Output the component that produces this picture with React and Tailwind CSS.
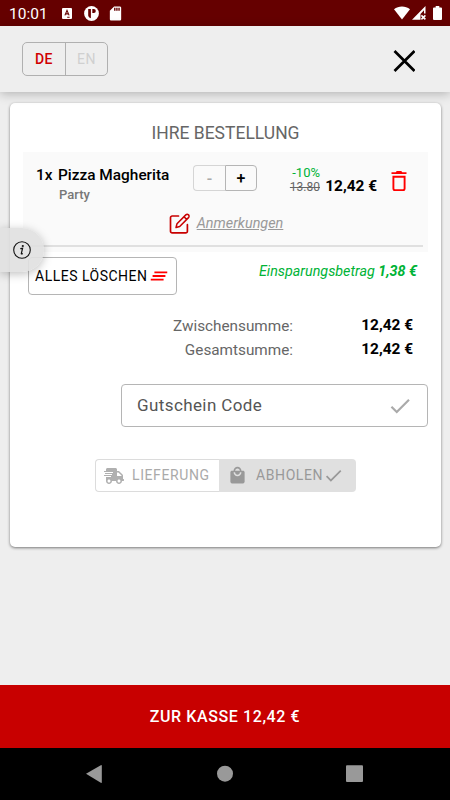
import { FaShippingFast } from 'react-icons/fa'
import { MdClearAll, MdDone, MdLocalMall, MdSdCard } from 'react-icons/md'

function StatusBar() {
  return (
    <div className="h-[26px] bg-[#650000] flex items-center pl-[9px] pr-2 text-white">
      <span className="w-[53px] text-[15.5px] leading-none pt-[3px]">10:01</span>
      <svg width="10" height="11" viewBox="0 0 10 11">
        <rect width="10" height="11" rx="1" fill="#fff" />
        <path d="M2.900 7.400 5 2.400l2.100 5M3.600 5.900h2.800M5.200 9.200h2.400" stroke="#650000" strokeWidth="1.100" fill="none" />
      </svg>
      <svg className="ml-3" width="15" height="15" viewBox="0 0 15 15">
        <circle cx="7.500" cy="7.500" r="7.400" fill="#fff" />
        <path d="M4.200 3h2.700v9.200C5 12 4.200 10.400 4.200 9z" fill="#650000" />
        <path d="M8.300 3h1.500a2 2 0 0 1 0 4H8.300z" fill="#650000" />
      </svg>
      <MdSdCard className="ml-[8px]" size={17} />
      <div className="ml-auto flex items-center">
        <svg width="16" height="14" viewBox="0 0 16 14">
          <path d="M0 3.300C4.600-.4 11.400-.4 16 3.300L8 13.500z" fill="#fff" />
        </svg>
        <svg className="ml-[2px]" width="14" height="14" viewBox="0 0 14 14">
          <path d="M13.500 0v7.500H12V4.200L8.500 8v5.800H0z" fill="#fff" />
          <path d="m9.400 9.400 4 4m0-4-4 4" stroke="#fff" strokeWidth="1.500" />
        </svg>
        <svg className="ml-[7px]" width="9" height="14" viewBox="0 0 9 14">
          <path d="M2.700 0h3.600v1.500H8a1 1 0 0 1 1 1V13a1 1 0 0 1-1 1H1a1 1 0 0 1-1-1V2.500a1 1 0 0 1 1-1h1.700z" fill="#fff" />
        </svg>
      </div>
    </div>
  )
}

function Header() {
  return (
    <header className="relative h-[66px] bg-[#eee] flex items-center justify-between pl-[22px] pr-[35px] shadow-[0_2px_10px_rgba(0,0,0,0.25)]">
      <div className="flex w-[86px] h-[34px] border border-[#b0b0b0] rounded-[5px] text-sm tracking-[0.5px]">
        <button className="w-[43px] border-r border-[#b0b0b0] font-medium text-[#d00000]">DE</button>
        <button className="flex-1 text-[#d0d0d0]">EN</button>
      </div>
      <svg className="mt-[4px]" width="22" height="22" viewBox="0 0 22 22">
        <path d="m1.500 1 20 20M21.500 1l-20 20" stroke="#000" strokeWidth="2.700" />
      </svg>
    </header>
  )
}

function TrashIcon() {
  return (
    <svg className="ml-[14px] mt-[6px]" width="16" height="21" viewBox="0 0 16 21">
      <path d="M2.400 5.700h11.200v11.800a1.600 1.600 0 0 1-1.600 1.600H4a1.600 1.600 0 0 1-1.600-1.600z" fill="none" stroke="#f00" strokeWidth="1.900" />
      <path d="M.5 1.200h4.200L5.800 0h4.400l1.100 1.200h4.200v1.900H.5z" fill="#f00" />
    </svg>
  )
}

function EditIcon() {
  return (
    <svg width="22" height="22" viewBox="0 0 22 22" fill="none" stroke="#c80000" strokeLinejoin="round" strokeLinecap="round">
      <path d="M10.500 3H4.200A1.700 1.700 0 0 0 2.500 4.700v13.500a1.700 1.700 0 0 0 1.700 1.700h13.500a1.700 1.700 0 0 0 1.700-1.700v-6.500" strokeWidth="1.700" />
      <path d="M17.800 1.900a1.900 1.900 0 0 1 2.700 2.700L11.700 13.500 8 14.500l1-3.700zM16 3.700 18.700 6.400" strokeWidth="1.500" />
    </svg>
  )
}

function CartItem() {
  return (
    <div className="h-[100px] bg-[#fafafa] mx-[13px]">
      <div className="h-[51px] flex pt-[13px]">
        <div className="w-[170px] pl-[13px]">
          <div className="flex text-[15.400px] leading-[20px] font-medium text-black">
            <span className="w-[22px]">1x</span>
            <span>Pizza Magherita</span>
          </div>
          <div className="pl-[23px] text-[13px] leading-[19px] font-medium text-[#777]">Party</div>
        </div>
        <div className="flex w-[64px] h-[26px] text-base leading-[23px] font-medium">
          <button className="w-[32px] border border-[#d5d5d5] border-r-0 rounded-l-[4px] text-[#aaa]">-</button>
          <button className="w-[32px] border border-[#b5b5b5] rounded-r-[4px] text-black">+</button>
        </div>
        <div className="w-[63px] text-right leading-[14px] pt-[1px]">
          <div className="text-[13px] text-[#00b336]">-10%</div>
          <div className="text-[12px] text-[#666] line-through">13.80</div>
        </div>
        <div className="w-[57px] pt-[11px] text-right text-[15.400px] leading-[20px] font-bold text-black">12,42 €</div>
        <TrashIcon />
      </div>
      <div className="h-[42px] flex items-center justify-center pb-[1px]">
        <EditIcon />
        <span className="ml-[7px] text-[14.400px] italic underline text-[#999]">Anmerkungen</span>
      </div>
      <div className="h-[2px] mr-[5px] bg-[#e0e0e0]" />
    </div>
  )
}

function TotalRow({ label, value }) {
  return (
    <div className="flex h-6 items-center justify-end pr-[28px]">
      <span className="text-[15.300px] text-[#666]">{label}</span>
      <span className="w-[120px] text-right text-[15.400px] font-bold text-black">{value}</span>
    </div>
  )
}

function OrderCard() {
  return (
    <section className="ml-[10px] mr-[9px] mt-[11px] h-[444px] bg-white rounded-[5px] shadow-[0_1px_3px_rgba(0,0,0,0.5)]">
      <h1 className="h-[49px] pt-[20px] text-center text-[17.500px] leading-[20px] text-[#666]">IHRE BESTELLUNG</h1>
      <CartItem />
      <div className="flex justify-between pl-[18px] pr-[24px] pt-[5px]">
        <button className="w-[149px] h-[38px] border border-[#b5b5b5] rounded-[4px] flex items-center pl-[6px] text-[14px] tracking-[0.5px] text-black">
          ALLES LÖSCHEN
          <MdClearAll className="text-[#ff0000]" size={22} />
        </button>
        <p className="pt-[4px] text-[14.300px] italic text-[#00b336]">
          Einsparungsbetrag <b>1,38 €</b>
        </p>
      </div>
      <div className="pt-[19px]">
        <TotalRow label="Zwischensumme:" value="12,42 €" />
        <TotalRow label="Gesamtsumme:" value="12,42 €" />
      </div>
      <div className="ml-[111px] mt-[22px] w-[307px] h-[43px] border border-[#b5b5b5] rounded-[4px] flex items-center justify-between pl-[15px] pr-[14px] text-[17px] tracking-[0.4px] text-[#555]">
        Gutschein Code
        <MdDone className="text-[#aaa]" size={26} />
      </div>
      <div className="ml-[85px] mt-[32px] w-[261px] h-[33px] flex text-[14px] tracking-[0.6px]">
        <button className="w-[124px] border border-r-0 border-[#dcdcdc] rounded-l-[4px] flex items-center pl-[8px] text-[#aaa]">
          <FaShippingFast className="mr-[8px] text-[#b0b0b0]" size={20} />
          LIEFERUNG
        </button>
        <button className="flex-1 bg-[#e0e0e0] rounded-r-[4px] flex items-center pl-[9px] text-[#999]">
          <MdLocalMall className="mr-[9px]" size={19} />
          ABHOLEN
          <MdDone size={21} />
        </button>
      </div>
    </section>
  )
}

function InfoTab() {
  return (
    <div className="absolute left-0 top-[228px] w-[44px] h-[44px] rounded-r-[22px] bg-[#e0e0e0]/90 shadow-[0_2px_10px_rgba(0,0,0,0.25)] flex items-center pl-[13px]">
      <svg width="18" height="18" viewBox="0 0 18 18">
        <circle cx="9" cy="9" r="8.300" fill="none" stroke="#111" strokeWidth="1.100" />
        <circle cx="9.800" cy="5" r="1.100" fill="#111" />
        <path d="M7.300 7.600 9.600 7.300 8.300 12.600q-.2.900 1.500-.2" fill="none" stroke="#111" strokeWidth="1.200" />
      </svg>
    </div>
  )
}

function NavBar() {
  return (
    <nav className="h-[52px] bg-black">
      <svg width="450" height="52" viewBox="0 0 450 52" fill="#999">
        <path d="M86 25.700 100.800 17.200q1-.5 1 .6v16.400q0 1.100-1 .6z" />
        <circle cx="225" cy="25.700" r="8" />
        <rect x="346" y="17.300" width="17" height="16.800" rx="1" />
      </svg>
    </nav>
  )
}

export default function App() {
  return (
    <div className="relative w-[450px] h-[800px] overflow-hidden bg-[#eee] flex flex-col font-[Roboto,sans-serif]">
      <StatusBar />
      <Header />
      <main className="flex-1">
        <OrderCard />
      </main>
      <button className="h-[63px] bg-[#c80000] text-white text-base font-medium tracking-[0.6px]">ZUR KASSE 12,42 €</button>
      <NavBar />
      <InfoTab />
    </div>
  )
}
